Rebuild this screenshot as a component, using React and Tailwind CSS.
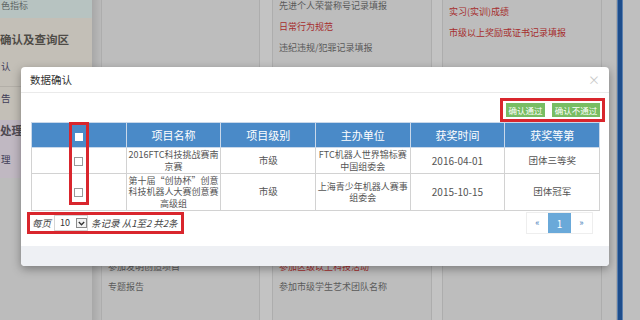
const rows = [
  { name: '2016FTC科技挑战赛南京赛', level: '市级', org: 'FTC机器人世界锦标赛中国组委会', date: '2016-04-01', prize: '团体三等奖', h: 'h-[26px]' },
  { name: '第十届“创协杯”创意科技机器人大赛创意赛高级组', level: '市级', org: '上海青少年机器人赛事组委会', date: '2015-10-15', prize: '团体冠军', h: 'h-[37px]' },
];

const heads = ['项目名称', '项目级别', '主办单位', '获奖时间', '获奖等第'];

function Sidebar() {
  return (
    <div className="w-[92px] h-full flex flex-col shrink-0 overflow-hidden">
      <div className="h-[18px] bg-[#b7c3c1] text-[9px] leading-[11px] text-[#5f6665] pl-[1px]">色指标</div>
      <div className="h-[102px] bg-[#c3bfb7] flex flex-col">
        <div className="pt-[13px] text-[11.5px] font-bold text-[#4f4c47] leading-[16px]">确认及查询区</div>
        <div className="pt-[12px] pl-[1px] h-[40px] text-[9.5px] text-[#3f3c58] leading-[14px] border-b border-[#b3afa8]">认</div>
        <div className="pt-[4px] pl-[1px] text-[9.5px] text-[#3f3c58] leading-[14px]">告</div>
      </div>
      <div className="h-[58px] bg-[#c0b8c2] flex flex-col">
        <div className="pt-[2px] text-[11.5px] font-bold text-[#4f4a52] leading-[16px]">处理</div>
        <div className="pt-[14px] pl-[1px] text-[9.5px] text-[#3f3c58] leading-[14px]">理</div>
      </div>
      <div className="flex-1 bg-[#bcbcbc]" />
    </div>
  );
}

function Column({ top = [], bottom = [], pt = 'pt-0' }) {
  return (
    <div className="h-full flex flex-col border-x border-[#adadad] bg-[#bdbdbd] pl-[6px] shrink-0">
      <div className={`flex flex-col gap-[10px] ${pt}`}>
        {top.map((t, i) => (
          <div key={i} className={`text-[9px] leading-[11px] whitespace-nowrap ${t.red ? 'text-[#a62d2d]' : 'text-[#5a5a5a]'}`}>{t.text}</div>
        ))}
      </div>
      <div className="mt-auto pb-[23px] flex flex-col">
        {bottom.map((t, i) => (
          <div key={i} className={`text-[9px] leading-[20px] whitespace-nowrap ${t.red ? 'text-[#a62d2d]' : 'text-[#5a5a5a]'}`}>{t.text}</div>
        ))}
      </div>
    </div>
  );
}

function Background() {
  return (
    <div className="w-[640px] h-[320px] flex bg-[#bdbdbd]">
      <Sidebar />
      <div className="w-[9px] h-full bg-gradient-to-r from-[#a8a8a8] to-[#bababa] shrink-0" />
      <div className="w-[159px] h-full">
        <Column bottom={[{ text: '参加发明创造项目' }, { text: '专题报告' }]} />
      </div>
      <div className="w-[12px] bg-[#c3c3c3]" />
      <div className="w-[160px] h-full">
        <Column
          pt="pt-0"
          top={[{ text: '先进个人荣誉称号记录填报' }, { text: '日常行为规范', red: true }, { text: '违纪违规/犯罪记录填报' }]}
          bottom={[{ text: '参加区级以上科技活动', red: true }, { text: '参加市级学生艺术团队名称' }]}
        />
      </div>
      <div className="w-[10px] bg-[#c3c3c3]" />
      <div className="w-[160px] h-full">
        <Column
          pt="pt-[6px]"
          top={[{ text: '实习(实训)成绩', red: true }, { text: '市级以上奖励或证书记录填报', red: true }]}
        />
      </div>
      <div className="w-[15px] bg-[#bebebe] border-r border-[#a9a9a9]" />
      <div className="w-[6px] bg-[#1d4d8c] border-x border-[#5a7fae]" />
      <div className="flex-1 bg-[#bfbfbf]" />
    </div>
  );
}

function Check({ head }) {
  return head ? (
    <span className="inline-block w-[8px] h-[8px] bg-white align-middle" />
  ) : (
    <span className="inline-block w-[9px] h-[9px] bg-white border border-[#9a9a9a] align-middle" />
  );
}

function Modal() {
  return (
    <div className="absolute left-[21px] top-[67px] w-[588px] h-[199px] bg-white rounded-[4px] shadow-[0_3px_10px_rgba(0,0,0,0.35)] flex flex-col overflow-hidden">
      <div className="h-[26px] shrink-0 flex items-center justify-between pl-[9px] pr-[9px] border-b border-[#eaeaea]">
        <span className="text-[10.5px] text-[#333]">数据确认</span>
        <span className="text-[12px] text-[#c8c8c8] leading-none">×</span>
      </div>
      <div className="pl-[10px] pr-[9px] pt-[5px] flex flex-col">
        <div className="flex justify-end mr-[-5px]">
          <div className="w-[105px] h-[24px] border-[3px] border-[#d9262d] flex items-center justify-end gap-[7px] pr-[2px]">
            <span className="h-[14px] w-[39px] text-center whitespace-nowrap bg-[#78bd63] text-white text-[8.5px] leading-[14px]">确认通过</span>
            <span className="h-[14px] w-[48px] text-center whitespace-nowrap bg-[#78bd63] text-white text-[8.5px] leading-[14px]">确认不通过</span>
          </div>
        </div>
        <div className="relative">
          <table className="w-[569px] table-fixed border-collapse">
            <thead>
              <tr className="h-[25px] bg-[#4a8ac8] text-white text-[11px]">
                <th className="font-normal border border-[#c9d8ea] text-center"><Check head /></th>
                {heads.map((h) => (
                  <th key={h} className="font-normal border border-[#c9d8ea] text-center">{h}</th>
                ))}
              </tr>
            </thead>
            <tbody>
              {rows.map((r, i) => (
                <tr key={i} className={`${r.h} text-[9px] text-[#555] leading-[11.5px]`}>
                  <td className="border border-[#d2d2d2] text-center"><Check /></td>
                  <td className="border border-[#d2d2d2] text-center px-0">{r.name}</td>
                  <td className="border border-[#d2d2d2] text-center text-[9.5px]">{r.level}</td>
                  <td className="border border-[#d2d2d2] text-center px-0">{r.org}</td>
                  <td className="border border-[#d2d2d2] text-center text-[10px]">{r.date}</td>
                  <td className="border border-[#d2d2d2] text-center text-[9.5px]">{r.prize}</td>
                </tr>
              ))}
            </tbody>
          </table>
          <div className="absolute left-[38px] top-0 w-[20px] h-[83px] border-[3px] border-[#d9262d]" />
        </div>
        <div className="flex items-center justify-between mt-[1px]">
          <div className="ml-[-4px] w-[157px] h-[22px] border-[3px] border-[#d9262d] flex items-center pl-[2px] gap-[3px] text-[9.5px] italic text-[#444] whitespace-nowrap">
            <span>每页</span>
            <span className="w-[34px] h-[16px] border border-[#d5d5d5] flex items-center pl-[5px] gap-[6px] not-italic text-[9px] text-[#333]">
              10
              <span className="w-[11px] h-[10px] border border-[#8a8a8a] bg-[#f2f2f2] flex items-center justify-center">
                <svg width="7" height="5" viewBox="0 0 7 5"><path d="M0.8 1 L3.5 3.8 L6.2 1" stroke="#333" strokeWidth="1.3" fill="none" /></svg>
              </span>
            </span>
            <span>条记录 从1至2 共2条</span>
          </div>
          <div className="mr-[7px] h-[22px] flex border border-[#eeeeee]">
            <span className="w-[21px] flex items-center justify-center text-[9px] text-[#3f7cb8]">«</span>
            <span className="w-[23px] flex items-center justify-center bg-[#6aa9d9] text-white text-[10px]">1</span>
            <span className="w-[21px] flex items-center justify-center text-[9px] text-[#3f7cb8]">»</span>
          </div>
        </div>
      </div>
      <div className="mt-auto h-[20px] bg-[#eef0f4]" />
    </div>
  );
}

export default function App() {
  return (
    <div className="relative w-[640px] h-[320px] overflow-hidden font-['Noto_Sans_CJK_SC',sans-serif]">
      <Background />
      <Modal />
    </div>
  );
}
